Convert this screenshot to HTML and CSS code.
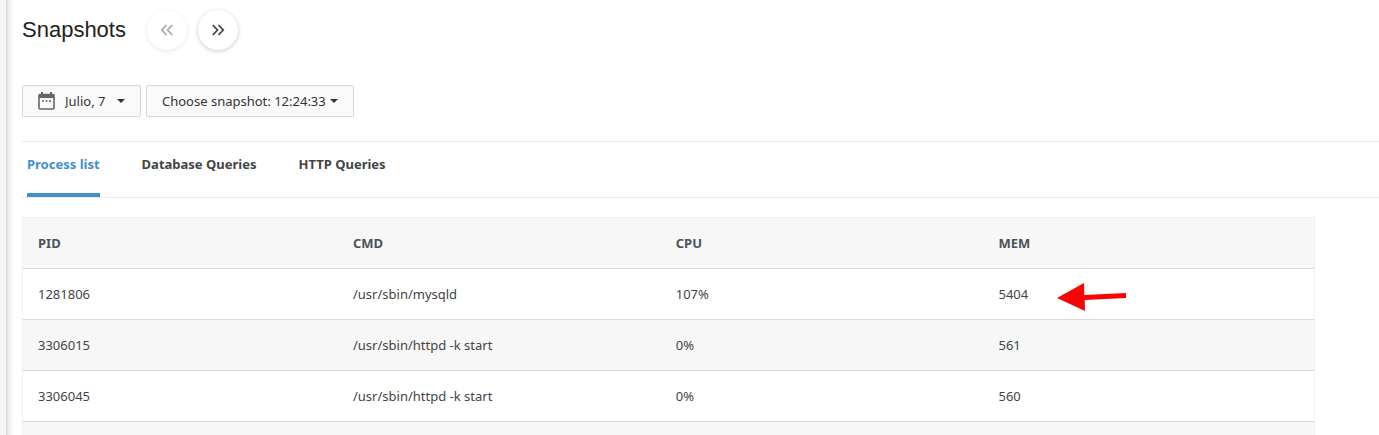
FILE: index.html
```
<!DOCTYPE html>
<html lang="en">
<head>
    <meta charset="utf-8" />
    <meta name="viewport" content="width=device-width, initial-scale=1" />
    <title>Snapshots</title>
    <link rel="stylesheet" href="styles.css">
</head>
<body>
    <aside class="sidebar-edge"></aside>

    <main class="content">
        <header class="page-header">
            <h1>Snapshots</h1>
            <div class="pager">
                <button class="round-button" type="button" aria-label="Previous snapshot" disabled>
                    <svg viewBox="0 0 14 12" width="14" height="12"><path d="M6.5 1 1.8 6l4.7 5M12.2 1 7.5 6l4.7 5" /></svg>
                </button>
                <button class="round-button" type="button" aria-label="Next snapshot">
                    <svg viewBox="0 0 14 12" width="14" height="12"><path d="M1.8 1l4.7 5-4.7 5M7.5 1l4.7 5-4.7 5" /></svg>
                </button>
            </div>
        </header>

        <div class="filters">
            <label class="dropdown dropdown-date">
                <svg class="calendar" viewBox="0 0 17 18" width="17" height="18">
                    <path d="M4 0v3M13 0v3" stroke="#666" stroke-width="2" />
                    <rect x="1" y="2.5" width="15" height="14.5" rx="1" fill="none" stroke="#666" stroke-width="1.6" />
                    <path d="M1 2h15v4H1z" fill="#666" />
                    <path d="M4 9h2M7.5 9h2M11 9h2" stroke="#666" stroke-width="1.4" />
                </svg>
                <select aria-label="Date">
                    <option>Julio, 7</option>
                </select>
            </label>
            <label class="dropdown">
                <select aria-label="Snapshot">
                    <option>Choose snapshot: 12:24:33</option>
                </select>
            </label>
        </div>

        <nav class="tabs">
            <a class="tab active" href="#processes">Process list</a>
            <a class="tab" href="#database">Database Queries</a>
            <a class="tab" href="#http">HTTP Queries</a>
        </nav>

        <div class="table-wrap" id="processes">
            <table class="process-table">
                <thead>
                    <tr>
                        <th>PID</th>
                        <th>CMD</th>
                        <th>CPU</th>
                        <th>MEM</th>
                    </tr>
                </thead>
                <tbody>
                    <tr>
                        <td>1281806</td>
                        <td>/usr/sbin/mysqld</td>
                        <td>107%</td>
                        <td class="marked">
                            5404
                            <svg class="arrow" viewBox="0 0 70 28" width="70" height="28">
                                <path d="M0 15 27 0 27.3 12 69 10v5L27.7 17 28 28z" fill="#f80404" />
                            </svg>
                        </td>
                    </tr>
                    <tr>
                        <td>3306015</td>
                        <td>/usr/sbin/httpd -k start</td>
                        <td>0%</td>
                        <td>561</td>
                    </tr>
                    <tr>
                        <td>3306045</td>
                        <td>/usr/sbin/httpd -k start</td>
                        <td>0%</td>
                        <td>560</td>
                    </tr>
                    <tr>
                        <td></td>
                        <td></td>
                        <td></td>
                        <td></td>
                    </tr>
                </tbody>
            </table>
        </div>
    </main>
</body>
</html>
```

FILE: styles.css
```
* {
    box-sizing: border-box;
}

body {
    display: flex;
    height: 100vh;
    margin: 0;
    overflow: hidden;
    background-color: #fff;
    color: #444;
    font-family: "Noto Sans", sans-serif;
    font-size: 13px;
    line-height: 20px;
}

.sidebar-edge {
    flex: 0 0 6px;
    background-color: #f5f5f5;
}

.content {
    flex: 1;
    min-width: 0;
    padding: 10px 0 0 16px;
    background: linear-gradient(to right, #d8d8d8, #f0f0f0 3px, #fff 8px);
}

.page-header {
    display: flex;
    align-items: center;
    gap: 21px;
    margin-bottom: 35px;
}

h1 {
    margin: 0;
    color: #222;
    font-family: "Liberation Sans", Arial, sans-serif;
    font-size: 22px;
    font-weight: 400;
    line-height: 40px;
}

.pager {
    display: flex;
    gap: 11px;
}

.round-button {
    display: flex;
    align-items: center;
    justify-content: center;
    width: 40px;
    height: 40px;
    padding: 0;
    border: none;
    border-radius: 50%;
    background-color: #fff;
    box-shadow: 0 1px 4px rgba(0, 0, 0, 0.22);
    cursor: pointer;
}

.round-button svg {
    fill: none;
    stroke: #444;
    stroke-width: 1.8;
}

.round-button:disabled {
    box-shadow: 0 1px 4px rgba(0, 0, 0, 0.1);
    cursor: default;
}

.round-button:disabled svg {
    stroke: #aaa;
}

.filters {
    display: flex;
    gap: 5px;
    margin-bottom: 24px;
}

.dropdown {
    position: relative;
}

.dropdown select {
    display: block;
    height: 32px;
    margin: 0;
    padding: 0 27px 0 15px;
    border: 1px solid #d6d6d6;
    border-radius: 2px;
    background-color: #fafafa;
    color: #333;
    font: inherit;
    appearance: none;
    cursor: pointer;
}

/* caret */
.dropdown::after {
    content: "";
    position: absolute;
    top: 14px;
    right: 16px;
    border: 4px solid transparent;
    border-top-color: #333;
    border-bottom: none;
    pointer-events: none;
}

.dropdown-date select {
    padding: 0 34px 0 42px;
}

.calendar {
    position: absolute;
    top: 7px;
    left: 16px;
    pointer-events: none;
}

.tabs {
    display: flex;
    gap: 42px;
    padding-left: 5px;
    border-top: 1px solid #ebebeb;
    border-bottom: 1px solid #ebebeb;
}

.tab {
    padding: 12px 0 19px;
    border-bottom: 4px solid transparent;
    color: #444;
    font-weight: 700;
    text-decoration: none;
}

.tab.active {
    border-bottom-color: #428fcc;
    color: #428fcc;
}

.table-wrap {
    margin: 19px 64px 0 0;
}

.process-table {
    width: 100%;
    border: 1px solid #f2f2f2;
    border-spacing: 0;
    table-layout: fixed;
}

.process-table th,
.process-table td {
    height: 51px;
    padding: 0 15px;
    border-bottom: 1px solid #d9d9d9;
    text-align: left;
}

.process-table th {
    width: 25%;
    background-color: #f7f7f7;
    color: #4b5259;
    font-weight: 700;
}

.process-table th:first-child {
    width: 24.4%;
}

.process-table th:last-child {
    width: auto;
}

.process-table tbody tr:nth-child(even) {
    background-color: #f7f7f7;
}

.marked {
    position: relative;
}

.arrow {
    position: absolute;
    top: 14px;
    left: 73px;
}
```
